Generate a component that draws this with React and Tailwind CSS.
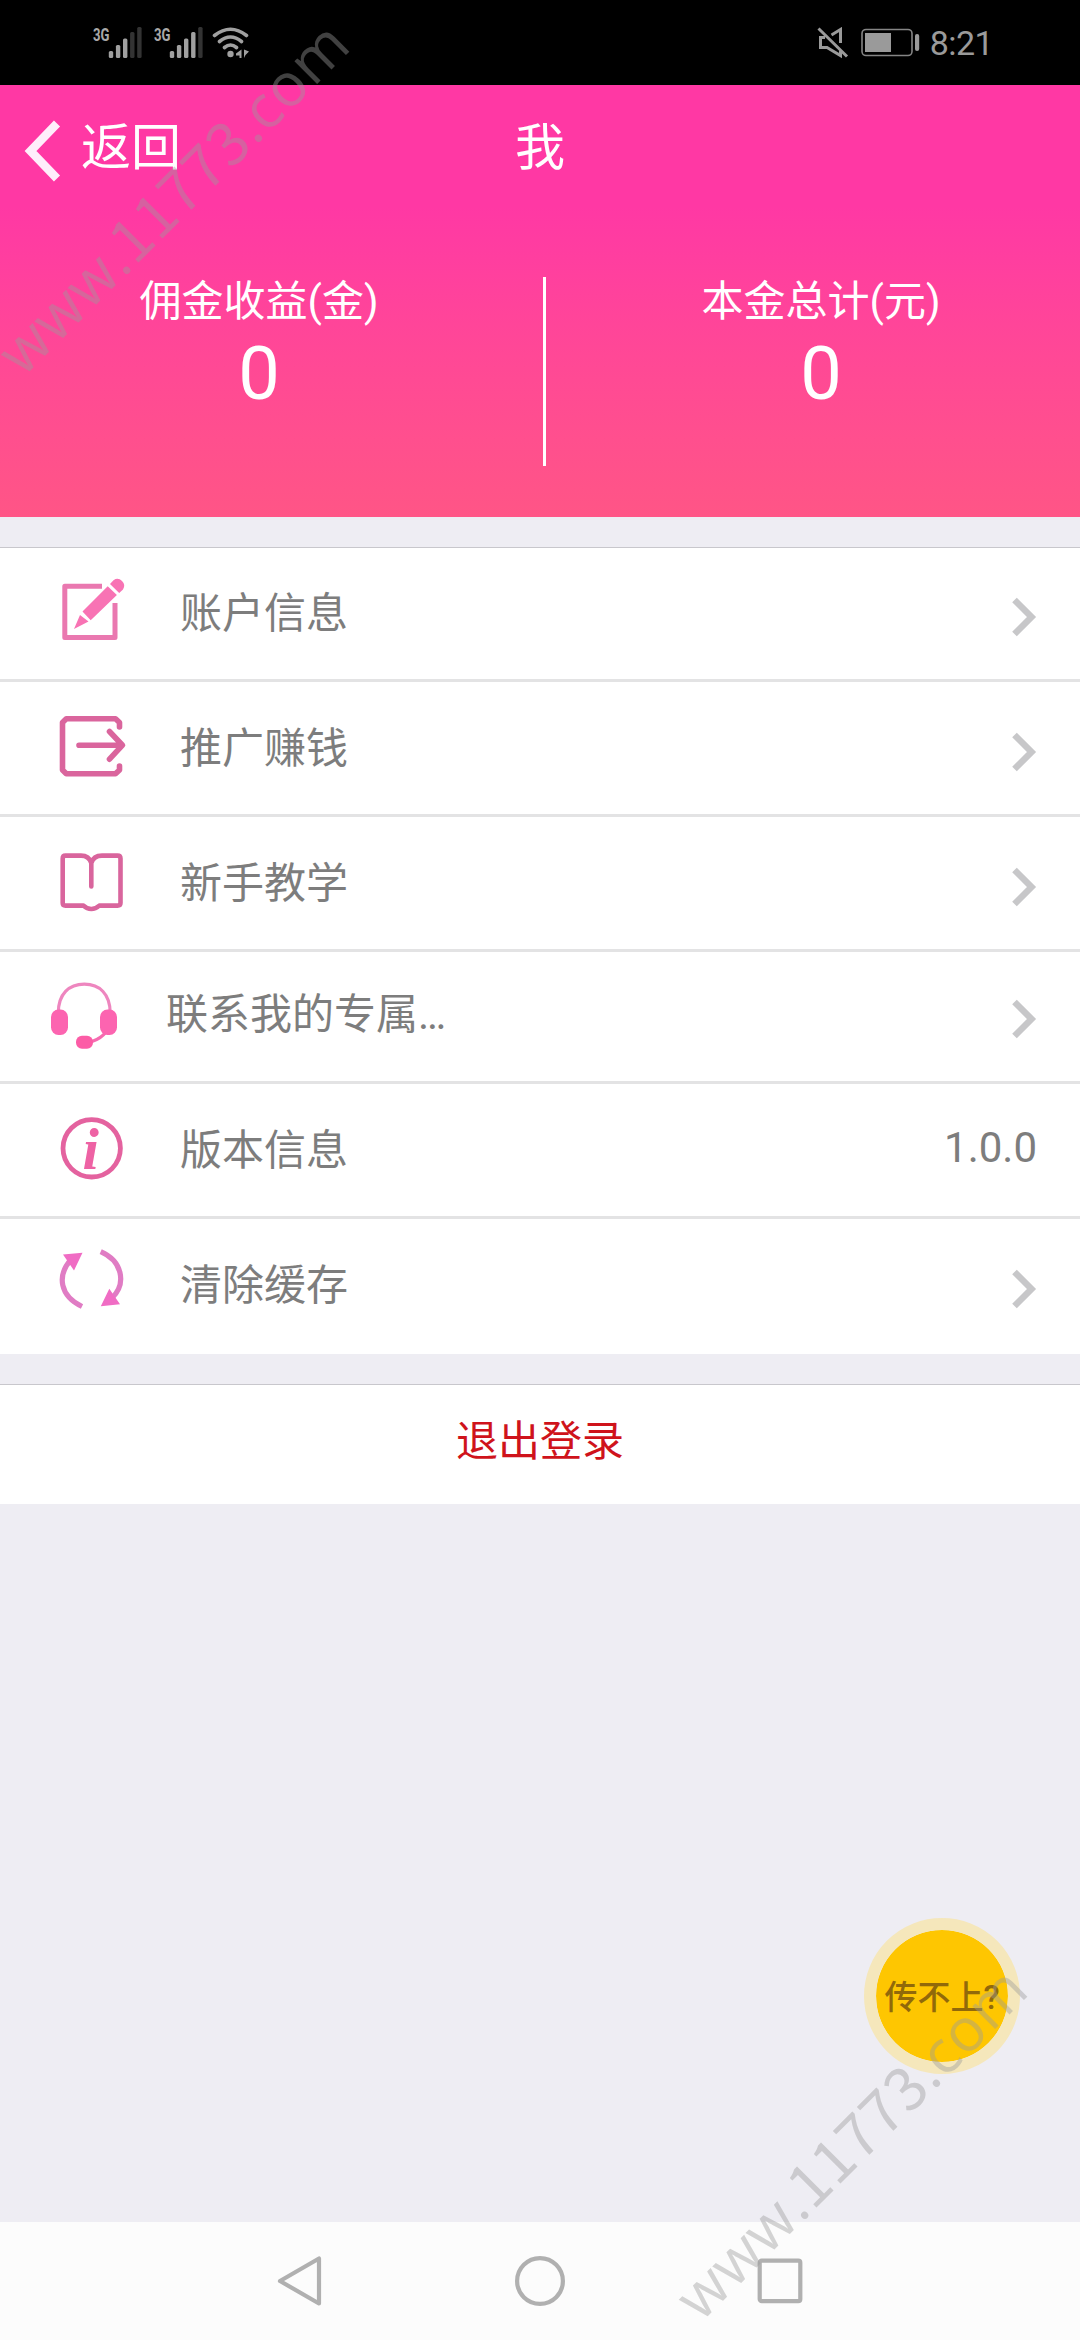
const EditIcon = () => (
  <svg viewBox="0 0 80 80" className="w-20 h-20" fill="#f873b4">
    <path d="M50 12.3H12.8V63.5H63V29" fill="none" stroke="#ea78b0" strokeWidth="5" strokeLinejoin="round" />
    <path d="M22 55L28 41L36.5 47.5ZM30.5 37.5L55.7 12.2L64.9 21L38.7 46.2ZM58 10L61.5 6.2A6.8 6.8 0 0 1 71 15.5L67.2 19Z" />
  </svg>
);

const ShareIcon = () => (
  <svg viewBox="0 0 80 80" className="w-20 h-20" fill="none" stroke="#da659d" strokeWidth="5.6" strokeLinecap="round" strokeLinejoin="round">
    <path d="M67.5 19V14.5L63.5 10.7H14.3L10.5 14.5V62L14.3 65.8H63.5L67.5 62V58" />
    <path d="M27 37.2H70M57.5 23.5L70.5 37.2L57.5 51.2" />
  </svg>
);

const BookIcon = () => (
  <svg viewBox="0 0 80 80" className="w-20 h-20" fill="none" stroke="#d9659d" strokeWidth="4.6" strokeLinecap="round" strokeLinejoin="round">
    <path d="M39.3 43.5V20Q37 12.6 29 12.6H13.5Q10.7 12.6 10.7 15.5V60Q10.7 62.6 13.5 62.6H31.5Q35 66 39.3 66T47.3 62.6H65.5Q68.5 62.6 68.5 60V15.5Q68.5 12.6 65.5 12.6H50Q41.5 12.6 39.3 20" />
  </svg>
);

const HeadsetIcon = () => (
  <svg viewBox="0 0 80 80" className="w-20 h-20" fill="#fc64b0">
    <path d="M14.3 36C14.3 17 25 7.2 40.3 7.2S66.2 17 66.2 36" fill="none" stroke="#ee86bf" strokeWidth="3.2" />
    <path d="M48 64.5Q57 61.5 62 55" fill="none" stroke="#f66bb0" strokeWidth="3.2" />
    <rect x="7" y="32.5" width="17" height="25.5" rx="7.5" />
    <rect x="56" y="32.5" width="17" height="25.5" rx="7.5" />
    <rect x="32" y="58.7" width="17" height="13" rx="6" fill="#fc5ca6" />
  </svg>
);

const InfoIcon = () => (
  <svg viewBox="0 0 80 80" className="w-20 h-20">
    <circle cx="39.7" cy="38.3" r="28.7" fill="none" stroke="#e4629f" strokeWidth="4.8" />
    <text x="30.5" y="58.5" fill="#ee62a4" className="font-['Liberation_Serif',serif] font-bold italic text-[59px]">i</text>
  </svg>
);

const RefreshIcon = () => (
  <svg viewBox="0 0 80 80" className="w-20 h-20" fill="#f06cc4">
    <g fill="none" stroke="#e07cc4" strokeWidth="5.2">
      <path d="M30 61.5C8 51 4.5 31 19 14.5" />
      <path d="M48.7 6.7C70 16 75 38 60 53" />
    </g>
    <path d="M11 9.5L30.5 7.7L22 25.5ZM57.3 43.7L68 59.3L48.8 61.3Z" />
  </svg>
);

const menu = [
  { label: "账户信息", icon: EditIcon, height: "h-[134px]" },
  { label: "推广赚钱", icon: ShareIcon, height: "h-[135px]" },
  { label: "新手教学", icon: BookIcon, height: "h-[135px]" },
  { label: "联系我的专属…", icon: HeadsetIcon, height: "h-[132px]", wide: true },
  { label: "版本信息", icon: InfoIcon, height: "h-[135px]", value: "1.0.0" },
  { label: "清除缓存", icon: RefreshIcon, height: "h-[135px]", last: true },
];

function MenuRow({ item }) {
  const Icon = item.icon;
  return (
    <div
      className={`flex items-center pr-[43px] border-b-[3px] ${item.height} ${item.last ? "border-white" : "border-[#e3e3e4]"} ${item.wide ? "pl-[44px] gap-[42px]" : "pl-[52px] gap-12"}`}
    >
      <Icon />
      <span className={`flex-1 text-[42px] leading-[60px] text-[#7d7d7d] ${item.wide ? "-mt-[3px]" : "mt-px"}`}>{item.label}</span>
      {item.value ? (
        <span className="text-[42px] leading-[60px] -mt-1 text-[#7d7d7d]">{item.value}</span>
      ) : (
        <svg viewBox="0 0 26 40" className={`w-[26px] h-10 ${item.wide ? "mt-[5px]" : "mt-[7px]"}`} fill="none" stroke="#c7c7c9" strokeWidth="6.5">
          <path d="M3.5 3L20.5 20L3.5 37" />
        </svg>
      )}
    </div>
  );
}

function Signal({ active }) {
  const tops = [24, 18, 11.5, 5, 0];
  return (
    <svg viewBox="0 0 48 31" className="w-12 h-[31px] overflow-visible">
      <text x="0" y="13.5" textLength="16.5" lengthAdjust="spacingAndGlyphs" fill="#a8a8a8" className="text-[19px] font-bold">3G</text>
      {tops.map((top, i) => (
        <rect key={top} x={15.8 + i * 7.1} y={top} width="4.4" height={31 - top} rx="1.5" fill={i < active ? "#a0a0a0" : "#333333"} />
      ))}
    </svg>
  );
}

function StatusBar() {
  return (
    <div className="h-[85px] bg-black flex items-center justify-between pl-[93px] pr-[87px]">
      <div className="flex items-center gap-[13px]">
        <Signal active={3} />
        <Signal active={4} />
        <svg viewBox="0 0 38 31" className="w-[38px] h-[31px] -ml-[3px]" fill="none" stroke="#a0a0a0" strokeWidth="3.6" strokeLinecap="round">
          <path d="M2.5 8.5Q18.5 -4 34.5 8.5M7.5 14.5Q18.5 5.5 29.5 14.5M12.5 20.500Q18.5 15.500 24.5 20.500" />
          <circle cx="18.5" cy="27" r="3.2" fill="#a0a0a0" stroke="none" />
          <path d="M29.5 22.5V31H27.500V28.500H24V26.500ZM32 22.5V31L33.500 28L37 24.500Z" fill="#a0a0a0" stroke="none" />
        </svg>
      </div>
      <div className="flex items-center">
        <svg viewBox="0 0 32 32" className="w-8 h-8 mr-3" fill="none" stroke="#9a9a9a" strokeWidth="3">
          <path d="M1.5 1.5L30 29.5M8 10.5H3.5V20.5H10L23.5 28.5V24M14.5 8L23.5 2.5V16" />
        </svg>
        <svg viewBox="0 0 59 29" className="w-[59px] h-[29px] mr-[10px]" fill="#9a9a9a">
          <rect x="1" y="1.500" width="50" height="26" rx="4" fill="none" stroke="#858585" strokeWidth="1.6" />
          <rect x="4" y="5" width="26" height="19" />
          <rect x="54" y="6" width="4.2" height="17" rx="2" />
        </svg>
        <span className="text-[34px] leading-[40px] tracking-[-0.6px] text-[#9a9a9a]">8:21</span>
      </div>
    </div>
  );
}

function Stat({ label, value }) {
  return (
    <div className="w-[518px] -mt-[2px] flex flex-col items-center text-white">
      <span className="text-[42px] leading-[54px]">{label}</span>
      <span className="text-[74px] leading-[90px]">{value}</span>
    </div>
  );
}

function Header() {
  return (
    <header className="h-[432px] bg-linear-to-b from-[#ff38a4] from-28% to-[#ff5586] text-white">
      <div className="h-[126px] flex items-center">
        <div className="w-[360px] flex items-center pl-6">
          <svg viewBox="0 0 38 62" className="w-[38px] h-[62px] mt-1.5" fill="none" stroke="#ffeefb" strokeWidth="8.5">
            <path d="M33 3.5L6.5 31L33 58.5" />
          </svg>
          <span className="ml-[19px] text-[50px] leading-[60px]">返回</span>
        </div>
        <h1 className="w-[360px] text-center text-[50px] leading-[60px]">我</h1>
      </div>
      <div className="mt-[66px] flex">
        <Stat label="佣金收益(金)" value="0" />
        <div className="w-[3px] h-[189px] ml-[25px] mr-[16px] bg-white" />
        <Stat label="本金总计(元)" value="0" />
      </div>
    </header>
  );
}

function NavBar() {
  return (
    <nav className="h-[118px] bg-[#fcfcfc] flex justify-center items-center gap-[190px]">
      <svg viewBox="0 0 50 52" className="w-[50px] h-[52px]" fill="none" stroke="#b0b0b0" strokeWidth="4.2" strokeLinejoin="round">
        <path d="M5 26L44 3.5V48.5Z" />
      </svg>
      <svg viewBox="0 0 50 52" className="w-[50px] h-[52px]" fill="none" stroke="#b0b0b0" strokeWidth="4.2">
        <circle cx="25" cy="26" r="22.9" />
      </svg>
      <svg viewBox="0 0 50 52" className="w-[50px] h-[52px]" fill="none" stroke="#b0b0b0" strokeWidth="4.2">
        <rect x="4.7" y="5.6" width="40.6" height="40.6" rx="2" />
      </svg>
    </nav>
  );
}

function Watermark({ className }) {
  return (
    <div className={`absolute origin-bottom-left -rotate-45 whitespace-nowrap font-['Open_Sans','Noto_Sans',sans-serif] text-[60px] leading-[60px] tracking-[0.7px] text-[#9b9b9b]/42 ${className}`}>
      www.<span className="font-['Noto_Sans_CJK_SC',sans-serif]">11773</span>.com
    </div>
  );
}

export default function App() {
  return (
    <div className="relative w-[1080px] h-[2340px] overflow-hidden flex flex-col bg-[#eeedf3] font-[Roboto,'Noto_Sans_CJK_SC',sans-serif]">
      <StatusBar />
      <Header />
      <main className="flex-1 pt-[30px]">
        <section className="bg-white border-t border-[#c8c7cc]">
          {menu.map((item) => (
            <MenuRow key={item.label} item={item} />
          ))}
        </section>
        <button className="mt-[30px] w-full h-[120px] bg-white border-t border-[#c8c7cc] text-[42px] leading-[60px] pb-1.5 text-[#cf131b]">
          退出登录
        </button>
      </main>
      <NavBar />

      <button className="absolute left-[864px] top-[1918px] w-[156px] h-[156px] rounded-full border-[12px] border-[#f5e7bb] bg-[#fec601] bg-clip-padding text-[33px] font-medium text-[#91690a] whitespace-nowrap flex items-center justify-center pt-[3px]">
        传不上?
      </button>
      <Watermark className="left-[28px] top-[320px]" />
      <Watermark className="left-[706px] top-[2265px]" />
    </div>
  );
}
